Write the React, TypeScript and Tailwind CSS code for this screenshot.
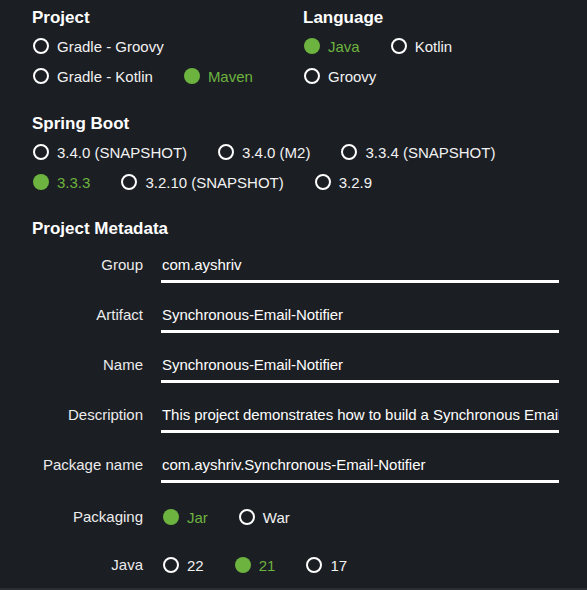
import React from "react";

const GREEN = "text-[#6db33f]";

function Radio({ label, checked = false, last = false }: { label: string; checked?: boolean; last?: boolean }) {
  return (
    <div className={`flex items-center h-[30px] ${last ? "" : "mr-[30px]"}`}>
      {checked ? (
        <span className="block w-4 h-4 rounded-full bg-[#6db33f] ml-px" />
      ) : (
        <span className="block w-4 h-4 rounded-full border-2 border-white ml-px" />
      )}
      <span className={`ml-[8px] text-[15px] leading-none ${checked ? GREEN : "text-[#f2f2f2]"}`}>{label}</span>
    </div>
  );
}

function Heading({ children }: { children: React.ReactNode }) {
  return <div className="text-[17px] leading-[20px] font-bold text-white">{children}</div>;
}

function Field({ label, value }: { label: string; value: string }) {
  return (
    <div className="flex items-start">
      <div className="w-[111px] text-right text-[15px] text-[#ececec] leading-[36px]">{label}</div>
      <div className="ml-[18px] flex-1 min-w-0 h-[36px] border-b-[3px] border-white overflow-hidden whitespace-nowrap text-[15px] tracking-[-0.06px] text-white leading-[36px] pl-px">
        {value}
      </div>
    </div>
  );
}

export default function App() {
  return (
    <div
      className="w-[587px] h-[590px] bg-[#1b1e23] flex flex-col overflow-hidden"
      style={{ fontFamily: '"Liberation Sans", Arial, sans-serif' }}
    >
      <div className="flex-1 pl-[32px] pr-[28px] pt-[8px]">
        <div className="flex">
          <div className="w-[271px]">
            <Heading>Project</Heading>
            <div className="mt-[3px]">
              <div className="flex">
                <Radio label="Gradle - Groovy" />
              </div>
              <div className="flex">
                <Radio label="Gradle - Kotlin" />
                <Radio label="Maven" checked />
              </div>
            </div>
          </div>
          <div>
            <Heading>Language</Heading>
            <div className="mt-[3px]">
              <div className="flex">
                <Radio label="Java" checked />
                <Radio label="Kotlin" />
              </div>
              <div className="flex">
                <Radio label="Groovy" />
              </div>
            </div>
          </div>
        </div>

        <div className="mt-[23px]">
          <Heading>Spring Boot</Heading>
          <div className="mt-[3px]">
            <div className="flex">
              <Radio label="3.4.0 (SNAPSHOT)" />
              <Radio label="3.4.0 (M2)" />
              <Radio label="3.3.4 (SNAPSHOT)" />
            </div>
            <div className="flex">
              <Radio label="3.3.3" checked />
              <Radio label="3.2.10 (SNAPSHOT)" />
              <Radio label="3.2.9" />
            </div>
          </div>
        </div>

        <div className="mt-[22px]">
          <Heading>Project Metadata</Heading>
          <div className="mt-[8px] flex flex-col gap-[14px]">
            <Field label="Group" value="com.ayshriv" />
            <Field label="Artifact" value="Synchronous-Email-Notifier" />
            <Field label="Name" value="Synchronous-Email-Notifier" />
            <Field
              label="Description"
              value="This project demonstrates how to build a Synchronous Email Notifier using Spring Boot"
            />
            <Field label="Package name" value="com.ayshriv.Synchronous-Email-Notifier" />
          </div>
          <div className="mt-[19px] flex flex-col gap-[18px]">
            <div className="flex items-center">
              <div className="w-[111px] text-right text-[15px] text-[#ececec]">Packaging</div>
              <div className="ml-[19px] flex">
                <Radio label="Jar" checked />
                <Radio label="War" />
              </div>
            </div>
            <div className="flex items-center">
              <div className="w-[111px] text-right text-[15px] text-[#ececec]">Java</div>
              <div className="ml-[19px] flex">
                <Radio label="22" />
                <Radio label="21" checked />
                <Radio label="17" />
              </div>
            </div>
          </div>
        </div>
      </div>
      <div className="h-[2px] bg-[#2a2d31]" />
    </div>
  );
}
